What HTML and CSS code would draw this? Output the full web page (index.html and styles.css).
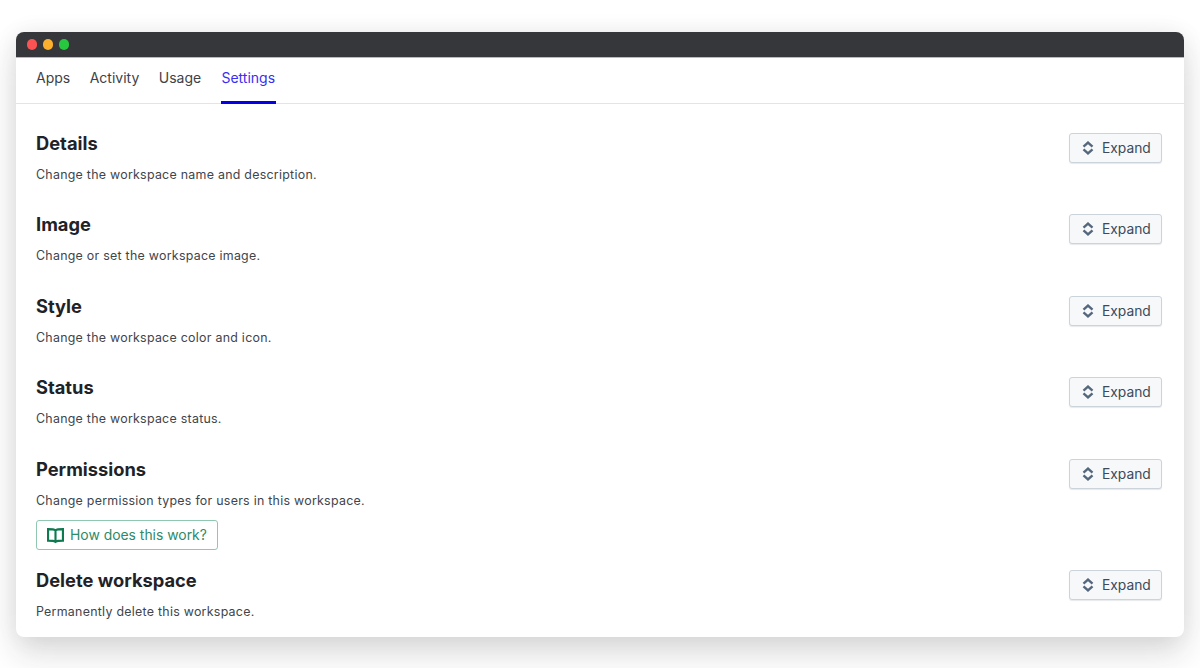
FILE: index.html
```html
<!DOCTYPE html>
<html lang="en">
<head>
<meta charset="utf-8">
<title>Workspace settings</title>
<link rel="stylesheet" href="styles.css">
</head>
<body>
<div class="window">
  <div class="titlebar">
    <span class="dot dot-red"></span>
    <span class="dot dot-yellow"></span>
    <span class="dot dot-green"></span>
  </div>
  <nav class="tabs">
    <a class="tab">Apps</a>
    <a class="tab">Activity</a>
    <a class="tab">Usage</a>
    <a class="tab tab-active">Settings</a>
  </nav>
  <main class="content">
    <section class="row">
      <div class="info">
        <h2 class="heading">Details</h2>
        <p class="desc">Change the workspace name and description.</p>
      </div>
      <button class="expand"><svg class="chev" viewBox="0 0 12 14"><path d="M1.500 5.600L6 1.600l4.500 4M1.500 8.400L6 12.400l4.500-4"/></svg>Expand</button>
    </section>
    <section class="row">
      <div class="info">
        <h2 class="heading">Image</h2>
        <p class="desc">Change or set the workspace image.</p>
      </div>
      <button class="expand"><svg class="chev" viewBox="0 0 12 14"><path d="M1.500 5.600L6 1.600l4.500 4M1.500 8.400L6 12.400l4.500-4"/></svg>Expand</button>
    </section>
    <section class="row">
      <div class="info">
        <h2 class="heading">Style</h2>
        <p class="desc">Change the workspace color and icon.</p>
      </div>
      <button class="expand"><svg class="chev" viewBox="0 0 12 14"><path d="M1.500 5.600L6 1.600l4.500 4M1.500 8.400L6 12.400l4.500-4"/></svg>Expand</button>
    </section>
    <section class="row">
      <div class="info">
        <h2 class="heading">Status</h2>
        <p class="desc">Change the workspace status.</p>
      </div>
      <button class="expand"><svg class="chev" viewBox="0 0 12 14"><path d="M1.500 5.600L6 1.600l4.500 4M1.500 8.400L6 12.400l4.500-4"/></svg>Expand</button>
    </section>
    <section class="row">
      <div class="info">
        <h2 class="heading">Permissions</h2>
        <p class="desc">Change permission types for users in this workspace.</p>
        <a class="help"><svg class="book" viewBox="0 0 16 16"><path d="M8 3.200C6.800 2.300 4.500 2 1 2v10.800c3.500 0 5.800.3 7 1.200 1.200-.9 3.500-1.200 7-1.200V2c-3.500 0-5.800.3-7 1.200zM8 3.200V14"/></svg>How does this work?</a>
      </div>
      <button class="expand"><svg class="chev" viewBox="0 0 12 14"><path d="M1.500 5.600L6 1.600l4.500 4M1.500 8.400L6 12.400l4.500-4"/></svg>Expand</button>
    </section>
    <section class="row">
      <div class="info">
        <h2 class="heading">Delete workspace</h2>
        <p class="desc">Permanently delete this workspace.</p>
      </div>
      <button class="expand"><svg class="chev" viewBox="0 0 12 14"><path d="M1.500 5.600L6 1.600l4.500 4M1.500 8.400L6 12.400l4.500-4"/></svg>Expand</button>
    </section>
  </main>
</div>
</body>
</html>
```
FILE: styles.css
```css
* { box-sizing: border-box; }
html, body { margin: 0; height: 668px; overflow: hidden; background: #fff; }
body {
  padding: 32px 16px 0;
  font-family: Inter, "Liberation Sans", sans-serif;
  color: #24292f;
}
.window {
  height: 605px;
  background: #fff;
  border-radius: 8px;
  box-shadow: 0 16px 32px rgba(30, 34, 40, .16), 0 0 24px rgba(30, 34, 40, .06);
  overflow: hidden;
}
.titlebar {
  height: 26px;
  background: #36373a;
  border-bottom: 1px solid #b9babc;
  display: flex;
  align-items: center;
  gap: 5.500px;
  padding: 0 10.750px;
}
.dot { width: 10.500px; height: 10.500px; border-radius: 50%; }
.dot-red { background: #fb5353; }
.dot-yellow { background: #fbb02e; }
.dot-green { background: #27c83f; }
.tabs {
  height: 46px;
  display: flex;
  gap: 19.500px;
  padding: 0 20px;
  border-bottom: 1px solid #e1e4e8;
}
.tab {
  font-size: 14px;
  line-height: 39px;
  height: 46px;
  color: #3d4248;
}
.tab-active {
  min-width: 55px;
  text-align: center;
  color: #3a2ff0;
  border-bottom: 3px solid #0600e6;
}
.content { padding: 23px 22px 0 20px; }
.row {
  display: flex;
  justify-content: space-between;
  align-items: flex-start;
  margin-bottom: 14.150px;
  padding-top: 4px;
}
.heading {
  margin: 0;
  font-size: 18.300px;
  line-height: 24px;
  font-weight: 700;
  color: #1f2328;
}
.desc {
  margin: 10px 0 9.300px;
  font-size: 12.400px;
  line-height: 20px;
  color: #40454c;
  letter-spacing: .270px;
}
.expand {
  margin-top: 2px;
  width: 93px;
  height: 30px;
  display: flex;
  align-items: center;
  gap: 8px;
  padding: 0 0 0 12px;
  background: #f6f8fa;
  border: 1px solid #cdd3da;
  border-radius: 3px;
  box-shadow: 0 1px 1px rgba(30, 40, 50, .1);
  font: 13.800px Inter, "Liberation Sans", sans-serif;
  color: #3c4a5a;
}
.chev {
  width: 12px;
  height: 14px;
  fill: none;
  stroke: #54677c;
  stroke-width: 2.400;
}
.help {
  width: 182px;
  height: 30px;
  display: flex;
  align-items: center;
  gap: 6px;
  padding-left: 10px;
  border: 1px solid #8fc7b0;
  border-radius: 3px;
  font-size: 13.900px;
  color: #2f8a68;
  background: #fff;
}
.book {
  width: 17px;
  height: 17px;
  fill: none;
  stroke: #0f7a50;
  stroke-width: 2;
}
```
